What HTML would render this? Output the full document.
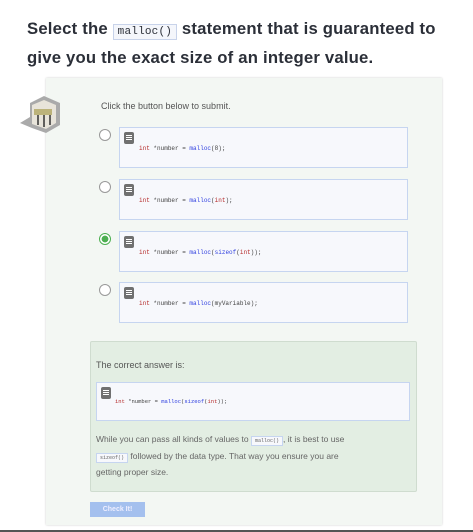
<!DOCTYPE html>
<html><head><style>
body{margin:0;width:473px;height:532px;background:#fff;position:relative;overflow:hidden;font-family:"Liberation Sans",sans-serif}
.h{position:absolute;left:27px;top:16px;width:430px;font-size:16.7px;font-weight:bold;color:#2b2f38;line-height:25px;letter-spacing:0.2px}
.h code{font-family:"Liberation Mono",monospace;font-weight:normal;font-size:11px;background:#f4f6fb;border:1px solid #c8d3ea;padding:1px 4px}
.card{position:absolute;left:46px;top:78px;width:396px;height:447px;background:#f3f7f3;box-shadow:0 0 2px #ccc}
.t{position:absolute;font-size:9px;color:#555}
.radio{position:absolute;left:99px;width:10px;height:10px;border:1px solid #999;border-radius:50%;background:#fff}
.box{position:absolute;left:119px;width:287px;height:39px;border:1px solid #c6d5f0;background:#f7f8fc}
.clip{position:absolute;left:4px;top:4px;width:10px;height:12px;background:#707070;border-radius:2px}
.clip:before{content:"";position:absolute;left:2px;top:3px;width:6px;height:1px;background:#fff;box-shadow:0 2px #fff,0 4px #fff}
.code{position:absolute;left:19px;top:17px;font-family:"Liberation Mono",monospace;font-size:6px;color:#444;white-space:pre}
.k{color:#b52a2a}.f{color:#3040e0}
.ans{position:absolute;left:90px;top:341px;width:325px;height:149px;background:#e3eee3;border:1px solid #cfdccf;border-radius:2px}
.ic{font-family:"Liberation Mono",monospace;font-size:5px;background:#f7f8fc;border:1px solid #c6d5f0;padding:1px 3px}
.btn{position:absolute;left:90px;top:502px;width:55px;height:15px;background:#a4c0ee;color:#eef;font-size:7px;text-align:center;line-height:15px;font-weight:bold}
</style></head><body>
<div class="h">Select the <code>malloc()</code> statement that is guaranteed to give you the exact size of an integer value.</div>
<div class="card"></div>
<svg style="position:absolute;left:18px;top:95px" width="45" height="40"><polygon points="12,8 26,1 42,8 42,30 28,38 14,33 2,28 12,22" fill="#aaa"/><polygon points="14,10 26,5 38,10 38,28 28,34 14,29" fill="#e8e4da"/><rect x="16" y="14" width="18" height="6" fill="#bcb37a"/><path d="M20,20v10M26,20v12M32,20v10" stroke="#333" stroke-width="1.5"/></svg>
<div class="t" style="left:101px;top:101px">Click the button below to submit.</div>
<div class="radio" style="top:129px"></div>
<div class="box" style="top:127px"><div class="clip"></div><div class="code"><span class="k">int</span> *number = <span class="f">malloc</span>(8);</div></div>
<div class="radio" style="top:181px"></div>
<div class="box" style="top:179px"><div class="clip"></div><div class="code"><span class="k">int</span> *number = <span class="f">malloc</span>(<span class="k">int</span>);</div></div>
<div class="radio" style="top:233px;border-color:#4caf50;background:radial-gradient(#4caf50 45%,#fff 50%)"></div>
<div class="box" style="top:231px"><div class="clip"></div><div class="code"><span class="k">int</span> *number = <span class="f">malloc</span>(<span class="f">sizeof</span>(<span class="k">int</span>));</div></div>
<div class="radio" style="top:284px"></div>
<div class="box" style="top:282px"><div class="clip"></div><div class="code"><span class="k">int</span> *number = <span class="f">malloc</span>(myVariable);</div></div>
<div class="ans">
<div class="t" style="left:5px;top:18px">The correct answer is:</div>
<div class="box" style="left:5px;top:40px;width:312px;height:37px"><div class="clip"></div><div class="code" style="left:18px;top:15px;font-size:5.5px"><span class="k">int</span> *number = <span class="f">malloc</span>(<span class="f">sizeof</span>(<span class="k">int</span>));</div></div>
<div class="t" style="left:5px;top:90px;width:310px;line-height:14.5px;font-size:8.5px;color:#666;white-space:nowrap">While you can pass all kinds of values to <span class="ic">malloc()</span>, it is best to use<br><span class="ic">sizeof()</span> followed by the data type. That way you ensure you are<br>getting proper size.</div>
</div>
<div class="btn">Check It!</div>
<div style="position:absolute;left:0;top:530px;width:473px;height:2px;background:#555"></div>
</body></html>
